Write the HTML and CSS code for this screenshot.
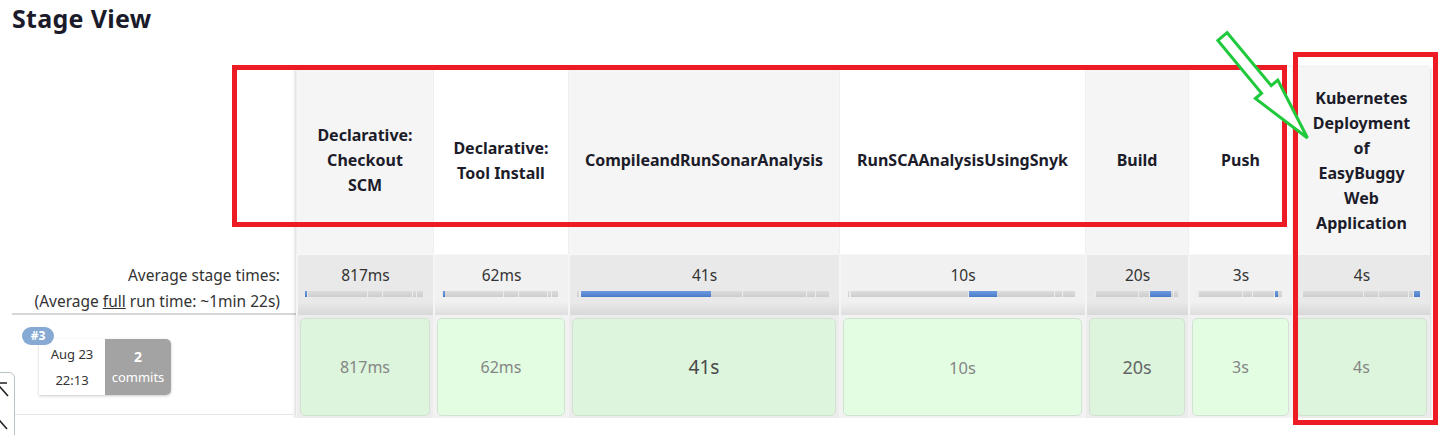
FILE: index.html
```html
<!DOCTYPE html>
<html lang="en">
<head>
<meta charset="utf-8">
<title>Stage View</title>
<link rel="stylesheet" href="styles.css">
</head>
<body>
<div class="page">
  <h2 class="title">Stage View</h2>
  <div class="stage-view">
    <div class="labels">
      <div class="labels-head"></div>
      <div class="labels-avg">
        <div>Average stage times:</div>
        <div>(Average <u>full</u> run time: ~1min 22s)</div>
      </div>
      <div class="labels-build">
        <span class="badge">#3</span>
        <div class="build-card">
          <div class="build-date"><span>Aug 23</span><span>22:13</span></div>
          <div class="build-commits"><b>2</b><span>commits</span></div>
        </div>
      </div>
    </div>

    <div class="stages">
      <div class="head shaded">Declarative:<br>Checkout<br>SCM</div>
      <div class="head">Declarative:<br>Tool Install</div>
      <div class="head shaded">CompileandRunSonarAnalysis</div>
      <div class="head">RunSCAAnalysisUsingSnyk</div>
      <div class="head shaded">Build</div>
      <div class="head">Push</div>
      <div class="head shaded">Kubernetes<br>Deployment<br>of<br>EasyBuggy<br>Web<br>Application</div>

      <div class="avg shaded"><span>817ms</span>
        <div class="bar"><i class="on" style="width:1.0%"></i><i style="width:0.2%"></i><i style="width:51.8%"></i><i style="width:12.7%"></i><i style="width:25.4%"></i><i style="width:3.8%"></i><i style="width:5.1%"></i></div></div>
      <div class="avg"><span>62ms</span>
        <div class="bar"><i style="width:1.0%"></i><i class="on" style="width:0.9%"></i><i style="width:51.1%"></i><i style="width:12.7%"></i><i style="width:25.4%"></i><i style="width:3.8%"></i><i style="width:5.1%"></i></div></div>
      <div class="avg shaded"><span>41s</span>
        <div class="bar"><i style="width:1.0%"></i><i style="width:0.2%"></i><i class="on" style="width:51.8%"></i><i style="width:12.7%"></i><i style="width:25.4%"></i><i style="width:3.8%"></i><i style="width:5.1%"></i></div></div>
      <div class="avg"><span>10s</span>
        <div class="bar"><i style="width:1.0%"></i><i style="width:0.2%"></i><i style="width:51.8%"></i><i class="on" style="width:12.7%"></i><i style="width:25.4%"></i><i style="width:3.8%"></i><i style="width:5.1%"></i></div></div>
      <div class="avg shaded"><span>20s</span>
        <div class="bar"><i style="width:1.0%"></i><i style="width:0.2%"></i><i style="width:51.8%"></i><i style="width:12.7%"></i><i class="on" style="width:25.4%"></i><i style="width:3.8%"></i><i style="width:5.1%"></i></div></div>
      <div class="avg"><span>3s</span>
        <div class="bar"><i style="width:1.0%"></i><i style="width:0.2%"></i><i style="width:51.8%"></i><i style="width:12.7%"></i><i style="width:25.4%"></i><i class="on" style="width:3.8%"></i><i style="width:5.1%"></i></div></div>
      <div class="avg shaded"><span>4s</span>
        <div class="bar"><i style="width:1.0%"></i><i style="width:0.2%"></i><i style="width:51.8%"></i><i style="width:12.7%"></i><i style="width:25.4%"></i><i style="width:3.8%"></i><i class="on" style="width:5.1%"></i></div></div>

      <div class="cell shaded"><div class="box t-sm">817ms</div></div>
      <div class="cell"><div class="box t-sm">62ms</div></div>
      <div class="cell shaded"><div class="box t-xl">41s</div></div>
      <div class="cell"><div class="box t-md">10s</div></div>
      <div class="cell shaded"><div class="box t-lg">20s</div></div>
      <div class="cell"><div class="box t-sm">3s</div></div>
      <div class="cell shaded"><div class="box t-sm">4s</div></div>
    </div>
  </div>
</div>

<div class="scroll-widget">
  <svg width="31" height="70" viewBox="0 0 31 70">
    <path d="M9 11 H23 M8 24 L16 15 L24 24" fill="none" stroke="#222" stroke-width="1.6"/>
    <path d="M9 57 L16 49 L23 57" fill="none" stroke="#222" stroke-width="1.6"/>
  </svg>
</div>

<svg class="annot" width="1450" height="435" viewBox="0 0 1450 435">
  <rect x="234.5" y="67.5" width="1050" height="157" fill="none" stroke="#ed1c24" stroke-width="5"/>
  <rect x="1295.5" y="54.5" width="140" height="368" fill="none" stroke="#ed1c24" stroke-width="5"/>
  <polygon points="1227.2,32.7 1271.2,85.6 1277.8,80 1307.5,138 1255.4,98.5 1261.6,93.2 1217.9,40.4" fill="#fff" stroke="#1fc93b" stroke-width="3" stroke-linejoin="miter"/>
</svg>
</body>
</html>
```

FILE: styles.css
```css
* { box-sizing: border-box; }

html, body {
  margin: 0;
  padding: 0;
  background: #fff;
  font-family: "Noto Sans", "Open Sans", "Liberation Sans", sans-serif;
  color: #333;
  overflow: hidden;
}

.page {
  padding-left: 12px;
  position: relative;
}

.title {
  margin: 3px 0 34px;
  height: 30px;
  line-height: 30px;
  font-size: 25px;
  font-weight: 700;
  color: #1b1b2b;
  letter-spacing: 0.3px;
}

.stage-view {
  display: flex;
  align-items: flex-start;
}

/* left label column */
.labels {
  width: 284px;
  flex: none;
}

.labels-head {
  height: 187px;
}

.labels-avg {
  height: 61px;
  padding: 8px 16px 0 0;
  text-align: right;
  font-size: 15.5px;
  line-height: 26px;
  color: #333;
  border-bottom: 2px solid #d6d6d6;
}

.labels-build {
  position: relative;
  height: 100px;
  padding: 24px 0 0 27px;
  border-bottom: 1px solid #e8e8e8;
}

.badge {
  position: absolute;
  left: 10px;
  top: 12px;
  z-index: 2;
  width: 32px;
  height: 18px;
  border-radius: 9px;
  background: #86aad3;
  color: #fff;
  font-size: 12px;
  font-weight: 700;
  line-height: 18px;
  text-align: center;
}

.build-card {
  display: flex;
  width: 132px;
  height: 56px;
  border-radius: 0 5px 5px 0;
  box-shadow: 0 1px 3px rgba(0, 0, 0, 0.22);
}

.build-date {
  width: 66px;
  background: #fff;
  display: flex;
  flex-direction: column;
  align-items: center;
  justify-content: center;
  gap: 4px;
  font-size: 13px;
  line-height: 22px;
  color: #333;
}

.build-commits {
  width: 66px;
  background: #a3a3a3;
  border-radius: 0 5px 5px 0;
  display: flex;
  flex-direction: column;
  align-items: center;
  justify-content: center;
  color: #fff;
  font-size: 13px;
  line-height: 20px;
}

.build-commits b {
  font-size: 14px;
}

/* stage table */
.stages {
  display: grid;
  grid-template-columns: 137px 135px 271px 246px 103px 104px 138px;
  grid-template-rows: 187px 61px 103px;
  box-shadow: 0 1px 4px rgba(0, 0, 0, 0.25);
}

.head {
  display: flex;
  align-items: center;
  justify-content: center;
  text-align: center;
  font-size: 16px;
  font-weight: 700;
  line-height: 25px;
  color: #1c1c2a;
  background: #fff;
  border-left: 1px solid #efefef;
}

.head.shaded {
  background: #f5f5f5;
}

.avg {
  padding-top: 9px;
  text-align: center;
  font-size: 15.5px;
  line-height: 22px;
  color: #333;
  background: linear-gradient(#f1f1f1 0, #f1f1f1 78%, #dedede 100%);
  border-top: 1px solid #f7f7f7;
  border-left: 2px solid #f5f5f5;
}

.avg.shaded {
  background: linear-gradient(#e9e9e9 0, #e9e9e9 78%, #d8d8d8 100%);
}

.bar {
  display: flex;
  height: 6px;
  margin: 5px 10px 0 7px;
  background: #d4d4d4;
}

.bar i {
  display: block;
  height: 6px;
  background: linear-gradient(#dcdcdc, #cdcdcd);
  border-right: 1px solid #ececec;
}

.bar i:last-child {
  border-right: 0;
}

.bar i.on {
  background: linear-gradient(#6d9be0, #4a7bc8);
  border-right: 0;
  min-width: 2px;
}

.cell {
  padding: 3px 3px 2px 3px;
  background: #ececec;
  border-left: 1px solid #f4f4f4;
}

.cell:not(.shaded) {
  background: #f2f2f2;
}

.box {
  height: 100%;
  display: flex;
  align-items: center;
  justify-content: center;
  border: 1px solid #d2e2d2;
  border-radius: 5px;
  background: #e3fde3;
  color: #858585;
}

.cell.shaded .box {
  background: #dcf5dc;
}

.t-sm { font-size: 16px; }
.t-md { font-size: 16.5px; color: #858585; }
.t-lg { font-size: 18px; color: #666; }
.t-xl { font-size: 19px; color: #484848; }

/* floating scroll helper cut off at the window edge */
.scroll-widget {
  position: fixed;
  left: -16px;
  top: 372px;
  width: 31px;
  height: 70px;
  border: 1.5px solid #b9c3c7;
  border-radius: 6px;
  background: #fff;
  z-index: 5;
}

.scroll-widget svg {
  display: block;
  margin: -1.5px;
}

/* annotation overlay */
.annot {
  position: absolute;
  left: 0;
  top: 0;
  z-index: 10;
  pointer-events: none;
}
```
